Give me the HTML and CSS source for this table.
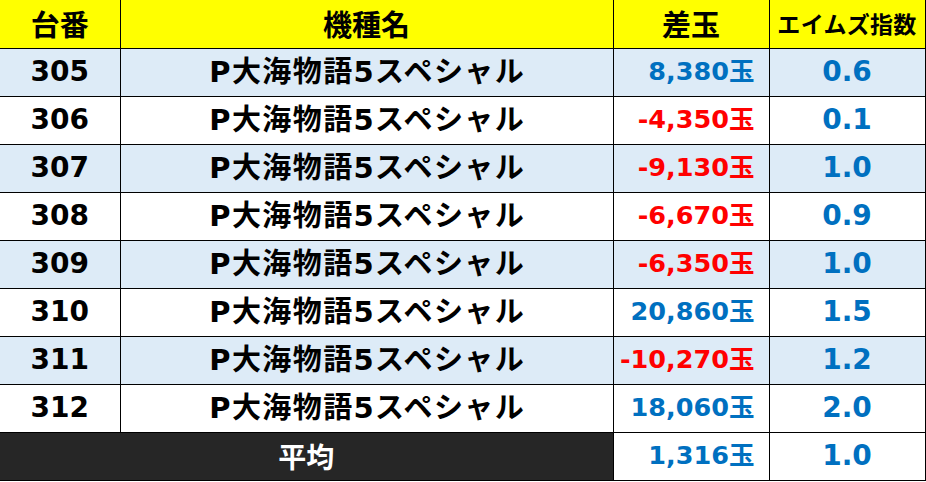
FILE: index.html
```html
<!DOCTYPE html>
<html lang="ja">
<head>
<meta charset="utf-8">
<title>エイムズ指数</title>
<link rel="stylesheet" href="styles.css">
</head>
<body>
<table class="data">
  <colgroup>
    <col class="c-no">
    <col class="c-name">
    <col class="c-diff">
    <col class="c-idx">
  </colgroup>
  <thead>
    <tr class="head">
      <th>台番</th>
      <th>機種名</th>
      <th>差玉</th>
      <th class="idx-head">エイムズ指数</th>
    </tr>
  </thead>
  <tbody>
    <tr class="odd"><td class="no">305</td><td class="name">P大海物語5スペシャル</td><td class="diff plus">8,380玉</td><td class="idx">0.6</td></tr>
    <tr class="even"><td class="no">306</td><td class="name">P大海物語5スペシャル</td><td class="diff minus">-4,350玉</td><td class="idx">0.1</td></tr>
    <tr class="odd"><td class="no">307</td><td class="name">P大海物語5スペシャル</td><td class="diff minus">-9,130玉</td><td class="idx">1.0</td></tr>
    <tr class="even"><td class="no">308</td><td class="name">P大海物語5スペシャル</td><td class="diff minus">-6,670玉</td><td class="idx">0.9</td></tr>
    <tr class="odd"><td class="no">309</td><td class="name">P大海物語5スペシャル</td><td class="diff minus">-6,350玉</td><td class="idx">1.0</td></tr>
    <tr class="even"><td class="no">310</td><td class="name">P大海物語5スペシャル</td><td class="diff plus">20,860玉</td><td class="idx">1.5</td></tr>
    <tr class="odd"><td class="no">311</td><td class="name">P大海物語5スペシャル</td><td class="diff minus">-10,270玉</td><td class="idx">1.2</td></tr>
    <tr class="even"><td class="no">312</td><td class="name">P大海物語5スペシャル</td><td class="diff plus">18,060玉</td><td class="idx">2.0</td></tr>
    <tr class="avg"><td class="avg-label" colspan="2">平均</td><td class="diff plus">1,316玉</td><td class="idx">1.0</td></tr>
  </tbody>
</table>
</body>
</html>
```

FILE: styles.css
```css
html, body {
  margin: 0;
  padding: 0;
  background: #ffffff;
}

.data {
  border-collapse: collapse;
  table-layout: fixed;
  width: 925px;
  font-family: "DejaVu Sans", "Noto Sans CJK JP", sans-serif;
  font-weight: bold;
  color: #000000;
}

.c-no { width: 120px; }
.c-name { width: 493px; }
.c-diff { width: 156px; }
.c-idx { width: 156px; }

.data th,
.data td {
  border: 1px solid #000000;
  padding: 0;
  height: 48px;
  box-sizing: border-box;
  text-align: center;
  vertical-align: middle;
  font-size: 28px;
  line-height: 1;
  white-space: nowrap;
  overflow: hidden;
}

.data tr > :first-child { border-left: 0; }
.data thead th { border-top: 0; }

.data .head th {
  background: #ffff00;
  font-family: "Noto Sans CJK JP", sans-serif;
  font-weight: bold;
  font-size: 29px;
}

.data .head .idx-head {
  font-size: 23px;
  letter-spacing: 0.3px;
}

.odd td { background: #ddebf7; }
.even td { background: #ffffff; }

.data td.name {
  font-size: 29px;
  letter-spacing: 1.4px;
  text-indent: 1.4px;
}

.data td.diff {
  text-align: right;
  padding-right: 14px;
  font-size: 25.5px;
}

.data td.plus { color: #0070c0; }
.data td.minus { color: #ff0000; }

.data td.idx {
  color: #0070c0;
}

.avg td { background: #ffffff; }
.data .avg .avg-label {
  background: #262626;
  color: #ffffff;
  font-family: "Noto Sans CJK JP", sans-serif;
}
```
